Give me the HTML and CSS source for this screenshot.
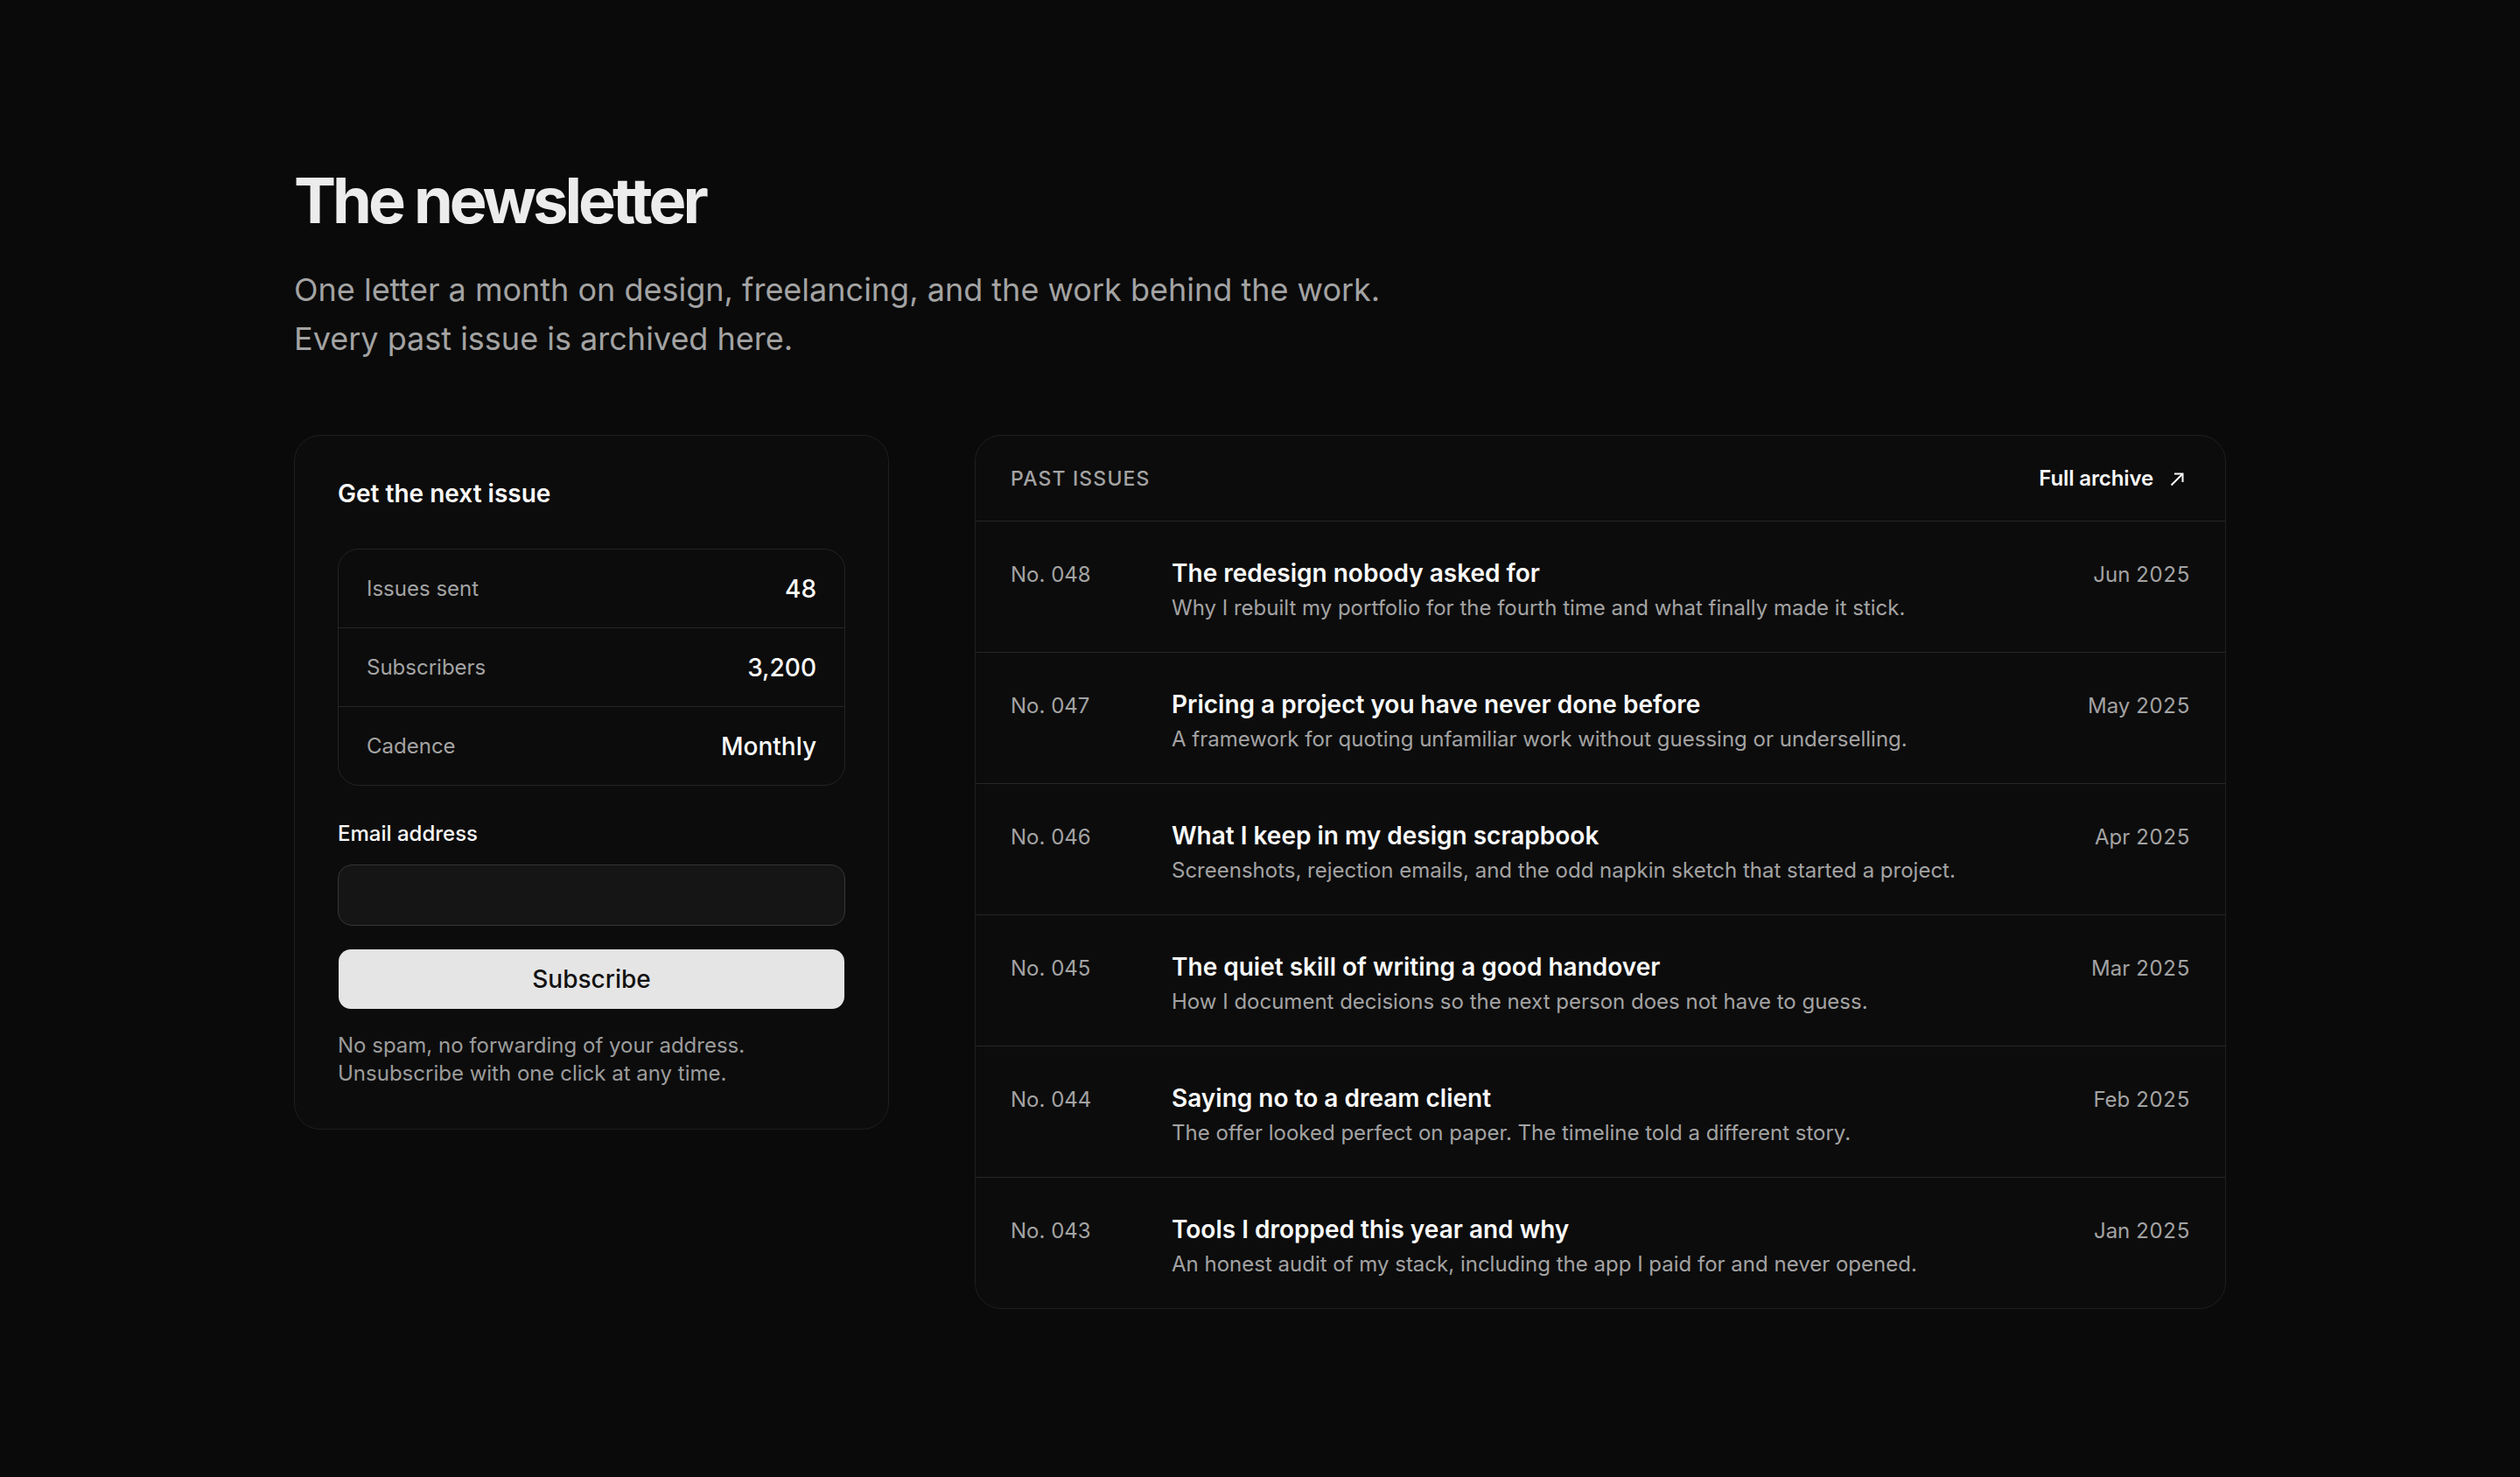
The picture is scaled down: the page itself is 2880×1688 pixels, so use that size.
FILE: index.html
```html
<!DOCTYPE html>
<html lang="en">

<head>
    <meta charset="UTF-8">
    <meta name="viewport" content="width=device-width, initial-scale=1.0">
    <title>The newsletter</title>
    <link rel="stylesheet" href="styles.css">
</head>

<body>
    <main class="page">

        <header class="intro">
            <h1 class="title">The newsletter</h1>
            <p class="lead">One letter a month on design, freelancing, and the work behind the work. Every past issue is archived here.</p>
        </header>

        <div class="layout">

            <aside class="signup">
                <h2 class="signupTitle">Get the next issue</h2>

                <div class="stats">
                    <div class="statRow">
                        <span class="statLabel">Issues sent</span>
                        <span class="statValue">48</span>
                    </div>
                    <div class="statRow">
                        <span class="statLabel">Subscribers</span>
                        <span class="statValue">3,200</span>
                    </div>
                    <div class="statRow">
                        <span class="statLabel">Cadence</span>
                        <span class="statValue">Monthly</span>
                    </div>
                </div>

                <form class="form" onsubmit="return false">
                    <label class="fieldLabel" for="email">Email address</label>
                    <input class="field" id="email" type="email">
                    <button class="btn" type="submit">Subscribe</button>
                </form>

                <p class="note">No spam, no forwarding of your address.<br>Unsubscribe with one click at any time.</p>
            </aside>

            <section class="issues">
                <div class="issuesHead">
                    <span class="issuesLabel">Past issues</span>
                    <a class="archiveLink" href="#">
                        Full archive
                        <svg width="20" height="20" viewBox="0 0 20 20" fill="none" stroke="currentColor" stroke-width="2">
                            <path d="M2.5 17.5 L15.5 4.5" />
                            <path d="M6 4.5 H15.5 V14" />
                        </svg>
                    </a>
                </div>

                <div class="issueRow">
                    <span class="issueNo">No. 048</span>
                    <div class="issueBody">
                        <h3 class="issueTitle">The redesign nobody asked for</h3>
                        <p class="issueDesc">Why I rebuilt my portfolio for the fourth time and what finally made it stick.</p>
                    </div>
                    <span class="issueDate">Jun 2025</span>
                </div>

                <div class="issueRow">
                    <span class="issueNo">No. 047</span>
                    <div class="issueBody">
                        <h3 class="issueTitle">Pricing a project you have never done before</h3>
                        <p class="issueDesc">A framework for quoting unfamiliar work without guessing or underselling.</p>
                    </div>
                    <span class="issueDate">May 2025</span>
                </div>

                <div class="issueRow">
                    <span class="issueNo">No. 046</span>
                    <div class="issueBody">
                        <h3 class="issueTitle">What I keep in my design scrapbook</h3>
                        <p class="issueDesc">Screenshots, rejection emails, and the odd napkin sketch that started a project.</p>
                    </div>
                    <span class="issueDate">Apr 2025</span>
                </div>

                <div class="issueRow">
                    <span class="issueNo">No. 045</span>
                    <div class="issueBody">
                        <h3 class="issueTitle">The quiet skill of writing a good handover</h3>
                        <p class="issueDesc">How I document decisions so the next person does not have to guess.</p>
                    </div>
                    <span class="issueDate">Mar 2025</span>
                </div>

                <div class="issueRow">
                    <span class="issueNo">No. 044</span>
                    <div class="issueBody">
                        <h3 class="issueTitle">Saying no to a dream client</h3>
                        <p class="issueDesc">The offer looked perfect on paper. The timeline told a different story.</p>
                    </div>
                    <span class="issueDate">Feb 2025</span>
                </div>

                <div class="issueRow">
                    <span class="issueNo">No. 043</span>
                    <div class="issueBody">
                        <h3 class="issueTitle">Tools I dropped this year and why</h3>
                        <p class="issueDesc">An honest audit of my stack, including the app I paid for and never opened.</p>
                    </div>
                    <span class="issueDate">Jan 2025</span>
                </div>
            </section>

        </div>

    </main>
</body>

</html>
```

FILE: styles.css
```css
* {
    margin: 0;
    padding: 0;
    box-sizing: border-box;
}

html,
body {
    width: 100%;
    min-height: 100%;
    background-color: #0a0a0a;
}

body {
    font-family: Inter, "Noto Sans", sans-serif;
    color: #fafafa;
}

.page {
    width: 2208px;
    margin: 0 auto;
    padding: 189px 0 120px;
}

/* intro */

.title {
    font-size: 72px;
    line-height: 79px;
    font-weight: 700;
    letter-spacing: -0.055em;
    color: #ececec;
    margin-bottom: 35px;
}

.lead {
    max-width: 1300px;
    font-size: 36px;
    line-height: 56px;
    color: #a3a3a3;
    margin-bottom: 82px;
}

.layout {
    display: grid;
    grid-template-columns: 680px 1fr;
    gap: 98px;
    align-items: start;
}

/* signup card */

.signup {
    background-color: #0c0c0c;
    border: 1px solid #1f1f1f;
    border-radius: 30px;
    padding: 48px 49px 47px;
}

.signupTitle {
    font-size: 28px;
    line-height: 36px;
    font-weight: 600;
    margin-bottom: 45px;
}

.stats {
    border: 1px solid #232323;
    border-radius: 24px;
}

.statRow {
    display: flex;
    justify-content: space-between;
    align-items: center;
    height: 89px;
    padding: 0 32px;
}

.statRow + .statRow {
    border-top: 1px solid #262626;
    height: 90px;
}

.statLabel {
    font-size: 24px;
    color: #a3a3a3;
}

.statValue {
    font-size: 28px;
    font-weight: 500;
    color: #fafafa;
}

.form {
    display: flex;
    flex-direction: column;
    margin-top: 39px;
}

.fieldLabel {
    font-size: 24px;
    line-height: 31px;
    font-weight: 500;
    margin-bottom: 20px;
}

.field {
    height: 70px;
    width: 100%;
    background-color: #151515;
    border: 1px solid #363636;
    border-radius: 16px;
    padding: 0 22px;
    font: inherit;
    font-size: 26px;
    color: #fafafa;
    outline: none;
}

.btn {
    height: 68px;
    margin: 27px 1px 0;
    background-color: #e5e5e5;
    border: none;
    border-radius: 14px;
    font-family: inherit;
    font-size: 28px;
    font-weight: 500;
    color: #111111;
    cursor: pointer;
}

.note {
    margin-top: 26px;
    font-size: 24px;
    line-height: 32px;
    color: #9c9c9c;
}

/* past issues */

.issues {
    background-color: #0c0c0c;
    border: 1px solid #1f1f1f;
    border-radius: 30px;
    overflow: hidden;
}

.issuesHead {
    display: flex;
    justify-content: space-between;
    align-items: center;
    height: 98px;
    padding: 0 44px 0 40px;
    border-bottom: 1px solid #262626;
}

.issuesLabel {
    font-size: 23px;
    font-weight: 500;
    letter-spacing: 0.05em;
    text-transform: uppercase;
    color: #a3a3a3;
}

.archiveLink {
    display: flex;
    align-items: center;
    gap: 18px;
    font-size: 24px;
    font-weight: 600;
    letter-spacing: -0.005em;
    color: #fafafa;
    text-decoration: none;
}

.issueRow {
    display: grid;
    grid-template-columns: 136px 1fr auto;
    column-gap: 48px;
    align-items: baseline;
    padding: 41px 40px 34px;
}

.issueRow + .issueRow {
    border-top: 1px solid #262626;
}

.issueNo,
.issueDate {
    font-size: 24px;
    color: #a3a3a3;
    white-space: nowrap;
}

.issueDate {
    font-variant-numeric: tabular-nums;
}

.issueTitle {
    font-size: 28px;
    line-height: 36px;
    font-weight: 600;
    color: #fafafa;
    margin-bottom: 6px;
}

.issueDesc {
    font-size: 24px;
    line-height: 32px;
    color: #a3a3a3;
}
```
